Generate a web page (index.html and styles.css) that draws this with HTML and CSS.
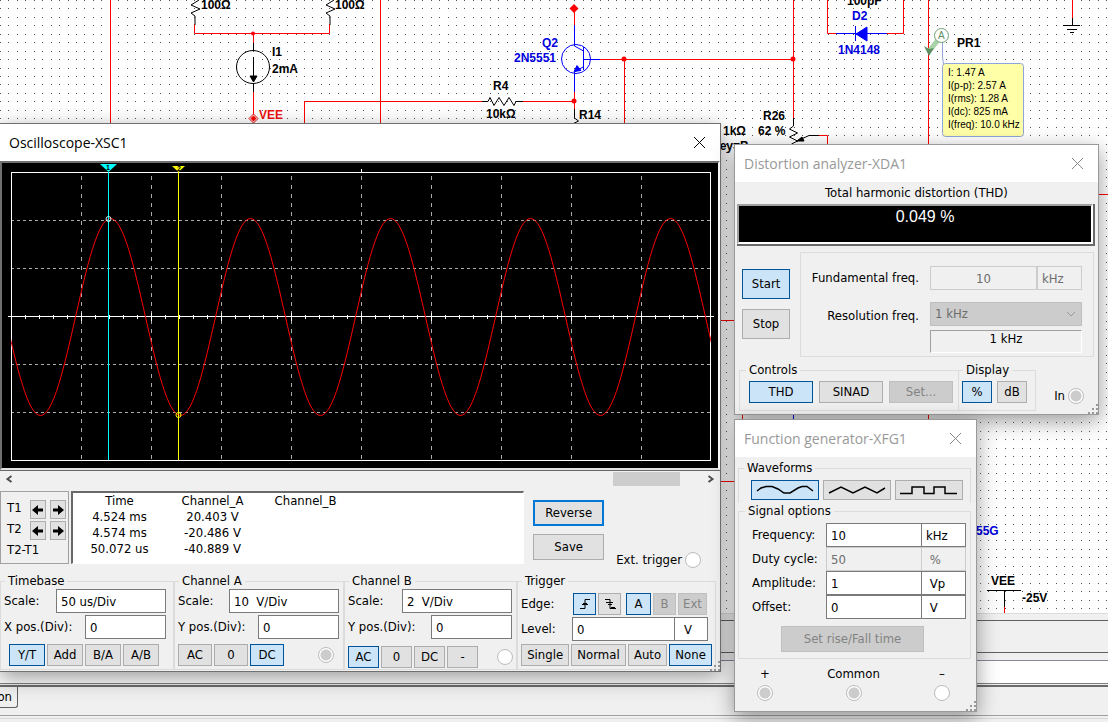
FILE: index.html
```html
<!DOCTYPE html>
<html lang="en">
  <head>
    <meta charset="UTF-8" />
    <meta name="viewport" content="width=device-width, initial-scale=1.0" />
    <title>Circuit simulation</title>
    <link rel="stylesheet" href="styles.css">
  </head>

  <body>
    <!-- schematic sheet -->
    <main class="sheet">
      <svg class="schematic" width="100%" height="100%" aria-label="Schematic">
        <defs>
          <path id="dots" d="M0 0h1v1h-1zM8 0h1v1h-1zM17 0h1v1h-1zM25 0h1v1h-1zM34 0h1v1h-1zM42 0h1v1h-1zM51 0h1v1h-1zM59 0h1v1h-1zM68 0h1v1h-1z" />
          <pattern id="grid" width="76" height="76" patternUnits="userSpaceOnUse">
            <g fill="#555" shape-rendering="crispEdges">
              <use href="#dots" />
              <use href="#dots" y="8" />
              <use href="#dots" y="17" />
              <use href="#dots" y="25" />
              <use href="#dots" y="34" />
              <use href="#dots" y="42" />
              <use href="#dots" y="51" />
              <use href="#dots" y="59" />
              <use href="#dots" y="68" />
            </g>
          </pattern>
        </defs>
        <rect width="100%" height="100%" fill="url(#grid)" />

        <!-- wires -->
        <g class="wire">
          <path d="M110.5 0V130M194.5 24V33.5H329.5V24M253.5 33V43M253.5 92V118M380.5 0V130" />
          <path d="M304.5 130V101.5H483M522 101.5H574.500V110M574.500 10V26M574.500 92V102M599 59.500H793M624.500 59V130" />
          <path d="M793.500 0V119M827.500 0V33.500H836M887 33.500H903.500V0M928.500 0V612M1072.500 0V18M818 135.500H827.500V150" />
          <path d="M720 320.500H736M1098 194.500H1108M720 481.500H736M742.500 412V422M1004.500 606V613" />
        </g>
        <path class="blue" d="M793.500 412V422" />
        <g fill="#f00">
          <circle cx="253" cy="33.500" r="2" />
          <circle cx="574" cy="101" r="2.500" />
          <circle cx="624" cy="59" r="2.500" />
          <circle cx="793" cy="59" r="2.500" />
          <path d="M574 4l4.500 4.500-4.500 4.500-4.500-4.500z" />
          <path d="M253.500 114l4.500 4.500-4.500 4.500-4.500-4.500z" fill="#fff" stroke="#d00" />
          <path d="M253.500 115.500l3 3-3 3-3-3z" />
        </g>

        <!-- resistors, current source, ground -->
        <g class="part">
          <path d="M199 0l-8 5 9 4-9 4 4 3V25" />
          <path d="M334 0l-8 5 9 4-9 4 4 3V25" />
          <circle cx="253" cy="67" r="16.500" />
          <path d="M253.500 43V51M253.500 57V80M253.500 83V92" />
          <path d="M250 76h7l-3.500 6z" fill="#000" />
          <path d="M482 101.500h6l2 -4 4 8 5-8 5 8 5-8 5 8 2-4h7" />
          <path d="M574.500 109V118l4 3-8 4" />
          <path d="M793.500 118V126l-4 3 8 4-8 4 8 4-6 3M797 141l12-5.500h10" />
          <path d="M797 141l5-4 2 4z" fill="#000" />
          <path d="M1072.500 18V25M1063 25.500H1080M1067 29.500H1077M1070 32.500H1074" />
          <path d="M987 590.500H1021M1004.500 591V607" />
        </g>

        <!-- transistor and diode -->
        <g class="blue">
          <circle cx="576" cy="59" r="14.500" />
          <path d="M574.500 25V46l9 5M583.500 47V70M583.500 59.500H600M583 67l-8.500 5V92" />
          <path d="M574 71.500l3-6 4 5z" fill="#00f" />
          <path d="M836 33.500H887M855.500 26V41" />
          <path d="M867 27v14l-11-7z" fill="#00f" />
        </g>

        <g class="name">
          <text x="201" y="9">100Ω</text>
          <text x="335" y="9">100Ω</text>
          <text x="272" y="56">I1</text>
          <text x="272" y="73">2mA</text>
          <text x="493" y="90">R4</text>
          <text x="486" y="118">10kΩ</text>
          <text x="579" y="119">R14</text>
          <text x="847" y="5">100pF</text>
          <text x="957" y="47">PR1</text>
          <text x="763" y="120">R26</text>
          <text x="758" y="135">62 %</text>
          <text x="723" y="135">1kΩ</text>
          <text x="711" y="150">Key=B</text>
          <text x="991" y="585">VEE</text>
          <text x="1022" y="602">-25V</text>
          <text x="259" y="119" fill="#e11">VEE</text>
          <text class="bluename" x="542" y="47">Q2</text>
          <text class="bluename" x="514" y="62">2N5551</text>
          <text class="bluename" x="852" y="20">D2</text>
          <text class="bluename" x="838" y="54">1N4148</text>
          <text class="bluename" x="976" y="535">55G</text>
        </g>

        <!-- current probe -->
        <g>
          <path d="M942.500 42V57l1 7" fill="none" stroke="#8fa4d8" />
          <path d="M938 40l-8 10" stroke="#a9d3a6" stroke-width="5" />
          <path d="M924 46l5 3 5-1-5 8z" fill="#5c8f62" />
          <circle cx="941.500" cy="35.500" r="7" fill="#fff" stroke="#6f9f73" />
          <text class="probe" x="938" y="39" fill="#5c8f62">A</text>
          <rect x="942.500" y="63.500" width="81" height="73" rx="3" fill="#ffffa8" stroke="#8fa4d8" />
          <text class="probe" x="948" y="76">I: 1.47 A</text>
          <text class="probe" x="948" y="89">I(p-p): 2.57 A</text>
          <text class="probe" x="948" y="102">I(rms): 1.28 A</text>
          <text class="probe" x="948" y="115">I(dc): 825 mA</text>
          <text class="probe" x="948" y="128">I(freq): 10.0 kHz</text>
        </g>
      </svg>
    </main>

    <footer class="dock">
      <div class="dock-bar"></div>
      <div class="dock-log"></div>
      <div class="dock-tabs"><button class="tab">on</button></div>
      <div class="dock-status"></div>
    </footer>

    <!-- oscilloscope -->
    <section class="window scope">
      <header class="titlebar">
        <h2>Oscilloscope-XSC1</h2>
        <button class="close" aria-label="Close"><svg width="13" height="13"><path d="M1 1l11 11M12 1L1 12" /></svg></button>
      </header>
      <div class="screen">
        <svg viewBox="2 164 716 303" aria-label="Trace">
          <clipPath id="plot"><rect x="11" y="173" width="700" height="288" /></clipPath>
          <g stroke="#aaa" shape-rendering="crispEdges">
            <path stroke-dasharray="4 5" d="M81.500 176V460M151.500 176V460M221.500 176V460M291.500 176V460M361.500 176V460M431.500 176V460M501.500 176V460M571.500 176V460M641.500 176V460" />
            <path stroke-dasharray="3 3" d="M11 220.500H711M11 268.500H711M11 364.500H711M11 412.500H711" />
          </g>
          <g stroke="#fff" fill="none" shape-rendering="crispEdges">
            <rect x="11.500" y="172.500" width="699" height="288" />
            <path d="M8 316.500H714M361.500 169V173" />
            <path d="M11 316.500H711" stroke-width="4" stroke-dasharray="1 13" />
            <path d="M11 316.500H711" stroke-width="8" stroke-dasharray="1 69" />
          </g>
          <path clip-path="url(#plot)" fill="none" stroke="#f00" d="M-29.500 218.500C-4 218.500 15 415.500 40.500 415.500S85 218.500 110.500 218.500S155 415.500 180.500 415.500S225 218.500 250.500 218.500S295 415.500 320.500 415.500S365 218.500 390.500 218.500S435 415.500 460.500 415.500S505 218.500 530.500 218.500S575 415.500 600.500 415.500S645 218.500 670.500 218.500S715 415.500 740.500 415.500" />
          <path d="M108.500 172V460" stroke="#0ff" shape-rendering="crispEdges" />
          <path d="M178.500 172V460" stroke="#ff0" shape-rendering="crispEdges" />
          <path d="M100 164h17l-8.500 8z" fill="#0ff" />
          <path d="M172 166h13l-6.500 6z" fill="#ff0" />
          <text class="marker" x="106" y="170">1</text>
          <text class="marker" x="177" y="171">2</text>
          <circle cx="108.500" cy="219" r="2.500" fill="none" stroke="#cff" />
          <circle cx="178.500" cy="415" r="2.500" fill="none" stroke="#ff0" />
        </svg>
      </div>
      <div class="scrollbar">
        <button aria-label="Scroll left"><svg width="7" height="8"><path d="M5.500 1l-4 3 4 3" /></svg></button>
        <span class="thumb"></span>
        <button aria-label="Scroll right"><svg width="7" height="8"><path d="M1.500 1l4 3-4 3" /></svg></button>
      </div>

      <div class="readout">
        <div class="cursors">
          <span>T1</span>
          <button class="btn" aria-label="T1 left"><svg width="12" height="12"><path d="M0 6l6-5v3.500h5v3H6V11z" /></svg></button>
          <button class="btn" aria-label="T1 right"><svg width="12" height="12"><path d="M12 6L6 1v3.500H1v3h5V11z" /></svg></button>
          <span>T2</span>
          <button class="btn" aria-label="T2 left"><svg width="12" height="12"><path d="M0 6l6-5v3.500h5v3H6V11z" /></svg></button>
          <button class="btn" aria-label="T2 right"><svg width="12" height="12"><path d="M12 6L6 1v3.500H1v3h5V11z" /></svg></button>
          <span class="diff">T2-T1</span>
        </div>
        <div class="values">
          <table>
            <tr><th>Time</th><th>Channel_A</th><th>Channel_B</th></tr>
            <tr><td>4.524 ms</td><td>20.403 V</td><td></td></tr>
            <tr><td>4.574 ms</td><td>-20.486 V</td><td></td></tr>
            <tr><td>50.072 us</td><td>-40.889 V</td><td></td></tr>
          </table>
        </div>
        <div class="actions">
          <button class="btn focus">Reverse</button>
          <button class="btn">Save</button>
        </div>
        <label class="ext">Ext. trigger <input type="radio" name="ext" /></label>
      </div>

      <div class="settings">
        <fieldset class="timebase">
          <legend>Timebase</legend>
          <label class="field">Scale:<input class="long" value="50 us/Div" /></label>
          <label class="field">X pos.(Div):<input class="short" value="0" /></label>
          <div class="buttons">
            <button class="btn on">Y/T</button>
            <button class="btn">Add</button>
            <button class="btn">B/A</button>
            <button class="btn">A/B</button>
          </div>
        </fieldset>
        <fieldset class="channel">
          <legend>Channel A</legend>
          <label class="field">Scale:<input class="long" value="10  V/Div" /></label>
          <label class="field">Y pos.(Div):<input class="short" value="0" /></label>
          <div class="buttons">
            <button class="btn">AC</button>
            <button class="btn">0</button>
            <button class="btn on">DC</button>
            <input type="radio" name="cha" checked disabled aria-label="Channel A input" />
          </div>
        </fieldset>
        <fieldset class="channel narrow">
          <legend>Channel B</legend>
          <label class="field">Scale:<input class="long" value="2  V/Div" /></label>
          <label class="field">Y pos.(Div):<input class="short" value="0" /></label>
          <div class="buttons">
            <button class="btn on">AC</button>
            <button class="btn">0</button>
            <button class="btn">DC</button>
            <button class="btn">-</button>
            <input type="radio" name="chb" aria-label="Channel B input" />
          </div>
        </fieldset>
        <fieldset class="trigger">
          <legend>Trigger</legend>
          <div class="edge">
            <span>Edge:</span>
            <button class="btn on" aria-label="Rising edge"><svg width="12" height="12"><path d="M1 10.500h5v-9h5M3 6.500h6M4 5.500h4" /></svg></button>
            <button class="btn" aria-label="Falling edge"><svg width="12" height="12"><path d="M1 1.500h5v9h6M2 4.500h7M4 6.500h4M7 9.500h4" /></svg></button>
            <button class="btn on source">A</button>
            <button class="btn" disabled>B</button>
            <button class="btn" disabled>Ext</button>
          </div>
          <div class="level">
            <label for="level">Level:</label>
            <input id="level" value="0" /><input class="unit" value="V" aria-label="Level unit" />
          </div>
          <div class="buttons">
            <button class="btn">Single</button>
            <button class="btn">Normal</button>
            <button class="btn">Auto</button>
            <button class="btn on">None</button>
          </div>
        </fieldset>
      </div>
      <span class="grip"></span>
    </section>

    <!-- distortion analyzer -->
    <section class="window inactive analyzer">
      <header class="titlebar">
        <h2>Distortion analyzer-XDA1</h2>
        <button class="close" aria-label="Close"><svg width="13" height="13"><path d="M1 1l11 11M12 1L1 12" /></svg></button>
      </header>
      <p class="caption">Total harmonic distortion (THD)</p>
      <output class="thd">0.049 %</output>
      <div class="setup">
        <div class="run">
          <button class="btn on">Start</button>
          <button class="btn">Stop</button>
        </div>
        <div class="freqs">
          <label for="fund">Fundamental freq.</label>
          <div class="pair">
            <input id="fund" value="10" disabled />
            <input class="unit" value="kHz" disabled aria-label="Fundamental unit" />
          </div>
          <label class="res-label" for="res">Resolution freq.</label>
          <div class="select">
            <select id="res" disabled><option>1 kHz</option></select>
            <svg width="10" height="6"><path d="M1 1l4 4 4-4" /></svg>
          </div>
          <output class="actual">1 kHz</output>
        </div>
      </div>
      <div class="modes">
        <fieldset class="controls">
          <legend>Controls</legend>
          <button class="btn on">THD</button>
          <button class="btn">SINAD</button>
          <button class="btn" disabled>Set...</button>
        </fieldset>
        <fieldset class="display">
          <legend>Display</legend>
          <button class="btn on">%</button>
          <button class="btn">dB</button>
        </fieldset>
        <label class="in">In <input type="radio" name="in" checked disabled /></label>
      </div>
      <span class="grip"></span>
    </section>

    <!-- function generator -->
    <section class="window inactive generator">
      <header class="titlebar">
        <h2>Function generator-XFG1</h2>
        <button class="close" aria-label="Close"><svg width="13" height="13"><path d="M1 1l11 11M12 1L1 12" /></svg></button>
      </header>
      <div class="options">
        <fieldset class="waves">
          <legend>Waveforms</legend>
          <button class="btn on" aria-label="Sine"><svg width="58" height="10"><path d="M1 6L5 3 10 1.500H16L22 4 28 8H34L42 3 46 1.500H51L57 6" /></svg></button>
          <button class="btn" aria-label="Triangle"><svg width="58" height="10"><path d="M1 8L13 2 25 8 37 2 49 8 57 3" /></svg></button>
          <button class="btn" aria-label="Square"><svg width="58" height="10"><path d="M0 8.500H12V2H24V8.500H34V2H45V8.500H57" /></svg></button>
        </fieldset>
        <fieldset class="signal">
          <legend>Signal options</legend>
          <div class="row"><label for="freq">Frequency:</label><input id="freq" value="10" /><input class="unit" value="kHz" aria-label="Frequency unit" /></div>
          <div class="row"><label for="duty">Duty cycle:</label><input id="duty" value="50" disabled /><input class="unit" value=" %" disabled aria-label="Duty cycle unit" /></div>
          <div class="row"><label for="amp">Amplitude:</label><input id="amp" value="1" /><input class="unit" value=" Vp" aria-label="Amplitude unit" /></div>
          <div class="row"><label for="off">Offset:</label><input id="off" value="0" /><input class="unit" value=" V" aria-label="Offset unit" /></div>
          <button class="btn rise" disabled>Set rise/Fall time</button>
        </fieldset>
      </div>
      <div class="terminals">
        <label>+<input type="radio" name="plus" checked disabled /></label>
        <label>Common<input type="radio" name="common" checked disabled /></label>
        <label>–<input type="radio" name="minus" /></label>
      </div>
      <span class="grip"></span>
    </section>
  </body>
</html>
```
FILE: styles.css
```css
* {
  box-sizing: border-box;
}

body {
  margin: 0;
  height: 100vh;
  display: flex;
  flex-direction: column;
  position: relative;
  overflow: hidden;
  background-color: #fff;
  color: #000;
}

body,
button,
input,
select {
  font-family: "DejaVu Sans Condensed", Tahoma, "Open Sans", sans-serif;
  font-size: 13px;
  line-height: 16px;
}

/* schematic */
.sheet {
  flex: 1;
  min-height: 0;
}
.schematic {
  display: block;
}
.wire {
  fill: none;
  stroke: #f00;
}
.part {
  fill: none;
  stroke: #000;
}
.blue {
  fill: none;
  stroke: #00f;
}
.name {
  font-family: "Liberation Sans", Arial, sans-serif;
  font-size: 12px;
  font-weight: 700;
}
.bluename {
  fill: #00d;
}
.probe {
  font-family: "Liberation Sans", Arial, sans-serif;
  font-size: 10px;
}

/* panels along the bottom edge */
.dock {
  padding-top: 6px;
  background-color: #f0f0f0;
  border-top: 1px solid #ddd;
}
.dock-bar {
  height: 33px;
  border-top: 1px solid #606060;
  border-bottom: 1px solid #606060;
}
.dock-log {
  height: 24px;
  margin-top: 7px;
  background-color: #fff;
  border-top: 1px solid #889;
  border-bottom: 1px solid #808080;
}
.dock-tabs {
  height: 31px;
  margin-top: 1px;
  border-top: 2px solid #6c6c6c;
  border-bottom: 1px solid #a0a0a0;
}
.tab {
  display: block;
  width: 18px;
  height: 21px;
  padding: 0 5px 0 0;
  border: solid #606060;
  border-width: 0 1px 1px 0;
  border-radius: 0 0 3px 0;
  background-color: #f0f0f0;
  direction: rtl;
}
.dock-status {
  height: 4px;
  margin-top: 2px;
  border-top: 1px solid #d8d8d8;
}

/* floating windows */
.window {
  position: absolute;
  background-color: #f0f0f0;
  border: 1px solid #707070;
  box-shadow: 0 6px 20px rgba(0, 0, 0, 0.4);
}
.titlebar {
  display: flex;
  align-items: center;
  justify-content: space-between;
  height: 37px;
  padding: 0 14px 0 9px;
  background-color: #fff;
}
.titlebar h2 {
  margin: 0;
  font-family: "Open Sans", "Segoe UI", sans-serif;
  font-size: 14px;
  font-weight: 400;
}
.inactive {
  border-color: #999;
}
.inactive .titlebar h2 {
  color: #999;
}
.close {
  display: flex;
  padding: 0;
  border: none;
  background: none;
}
.close path {
  stroke: #000;
}
.inactive .close path {
  stroke: #888;
}
.grip {
  position: absolute;
  right: 0;
  bottom: 0;
  width: 12px;
  height: 12px;
  background: conic-gradient(transparent 25%, #999 0 50%, transparent 0) 0 0 / 4px 4px;
  clip-path: polygon(100% 0, 100% 100%, 0 100%);
}

/* controls */
.btn {
  display: flex;
  align-items: center;
  justify-content: center;
  height: 22px;
  padding: 0;
  border: 1px solid #adadad;
  background-color: #e1e1e1;
  color: #000;
}
.btn.on {
  border-color: #005499;
  background-color: #cce4f7;
}
.btn.focus {
  border: 2px solid #0078d7;
}
.btn:disabled {
  border-color: #bfbfbf;
  background-color: #ccc;
  color: #838383;
}
input {
  height: 24px;
  min-width: 0;
  margin: 0;
  padding: 0 4px;
  border: 1px solid #7a7a7a;
  border-radius: 0;
  background-color: #fff;
  color: #000;
  white-space: pre;
}
input:disabled {
  border-color: #ccc;
  background-color: #f0f0f0;
  color: #6d6d6d;
}
input[type="radio"] {
  appearance: none;
  flex: none;
  width: 16px;
  height: 16px;
  padding: 0;
  border: 1px solid #bcbcbc;
  border-radius: 50%;
  background-color: #fff;
}
input[type="radio"]:checked {
  background: radial-gradient(#ccc 5px, #fff 6px);
}
fieldset {
  min-width: 0;
  margin: 0;
  padding: 0;
  border: 1px solid #dcdcdc;
}
legend {
  margin-left: 1px;
  padding: 0 3px;
}
.buttons {
  display: flex;
  gap: 2px;
}

/* oscilloscope */
.scope {
  left: -1px;
  top: 123px;
  width: 722px;
}
.screen {
  padding: 1px 0;
  border: 2px solid #707070;
  border-right-color: #fff;
  border-bottom-color: #e3e3e3;
  box-shadow: 0 1px 0 #696969;
  background-color: #000;
}
.screen svg {
  display: block;
  width: 100%;
}
.marker {
  font-family: "Liberation Sans", Arial, sans-serif;
  font-size: 7px;
  font-weight: 700;
}
.scrollbar {
  display: flex;
  align-items: center;
  justify-content: space-between;
  height: 16px;
  margin: 1px 0 4px;
  padding: 0 6px;
}
.scrollbar button {
  display: flex;
  padding: 0;
  border: none;
  background: none;
}
.scrollbar path {
  fill: none;
  stroke: #505050;
  stroke-width: 2;
}
.thumb {
  width: 67px;
  height: 14px;
  margin-left: auto;
  margin-right: 27px;
  background-color: #cdcdcd;
}
.readout {
  display: flex;
  align-items: flex-start;
}
.cursors {
  display: grid;
  grid-template-columns: 19px 16px 16px;
  align-content: start;
  column-gap: 4px;
  row-gap: 2px;
  width: 69px;
  height: 73px;
  padding: 8px 0 0 6px;
  border: 1px solid #a0a0a0;
}
.cursors .btn {
  height: 19px;
}
.cursors .diff {
  grid-column: 1 / 4;
}
.values {
  flex: 1;
  height: 73px;
  margin-left: 2px;
  border: 1px solid #fff;
  border-top: 2px solid #696969;
  border-left: 2px solid #696969;
  background-color: #fff;
}
table {
  border-collapse: collapse;
}
th,
td {
  width: 93px;
  padding: 0;
  font-weight: 400;
  text-align: center;
}
.actions {
  display: flex;
  flex-direction: column;
  gap: 8px;
  margin: 9px 12px 0 9px;
}
.actions .btn {
  width: 71px;
  height: 26px;
}
.ext {
  display: flex;
  align-items: center;
  gap: 3px;
  padding: 61px 19px 0 0;
}
.settings {
  display: grid;
  grid-template-columns: 174px 170px 173px 1fr;
  margin-top: 5px;
  padding: 0 4px 1px 0;
}
.settings fieldset {
  padding: 0 3px 3px;
}
.field {
  display: flex;
  align-items: center;
  justify-content: space-between;
  margin-bottom: 2px;
  padding-right: 1px;
}
.long {
  width: 110px;
}
.short {
  width: 81px;
}
.settings .buttons {
  margin-top: 5px;
}
.timebase .field {
  padding-right: 4px;
}
.timebase .buttons {
  padding-left: 5px;
}
.timebase .btn {
  width: 36px;
}
.channel .buttons {
  align-items: center;
}
.channel .btn {
  width: 34px;
}
.settings .narrow {
  padding-bottom: 1px;
}
.narrow .buttons {
  padding-top: 2px;
}
.narrow .btn {
  width: 31px;
}
.buttons input {
  margin-left: auto;
  margin-right: 6px;
}
.narrow .buttons input {
  margin-right: 0;
}
.edge {
  display: flex;
  align-items: center;
  gap: 2px;
  padding-top: 4px;
}
.edge span {
  width: 50px;
}
.edge .btn {
  width: 23px;
}
.edge .source {
  width: 25px;
  margin-left: 3px;
}
.edge .btn:last-child {
  width: 29px;
}
.edge path {
  fill: none;
  stroke: #000;
}
.level {
  display: flex;
  align-items: center;
  padding: 2px 4px 0 0;
}
.level label {
  flex: none;
  width: 51px;
}
.level input {
  flex: 1;
}
.level .unit {
  flex: none;
  width: 34px;
  margin-left: -1px;
  padding-left: 9px;
}
.settings .trigger .buttons {
  margin-top: 3px;
}
.trigger .buttons .btn {
  flex: 1 1 auto;
}

/* distortion analyzer */
.analyzer {
  left: 734px;
  top: 144px;
  width: 365px;
}
.caption {
  margin: 0;
  padding: 3px 0;
  text-align: center;
}
.thd {
  display: block;
  height: 40px;
  margin: 0 5px 0 2px;
  padding: 2px 0 0 20px;
  border: 2px solid #a0a0a0;
  border-right-color: #fff;
  border-bottom-color: #fff;
  box-shadow: 1px 1px 0 1px #696969;
  background-color: #000;
  color: #fff;
  font-family: "Liberation Sans", Arial, sans-serif;
  font-size: 16px;
  line-height: 18px;
  text-align: center;
}
.setup {
  display: flex;
  justify-content: space-between;
  padding: 8px 4px 0 7px;
}
.run {
  display: flex;
  flex-direction: column;
  gap: 10px;
  padding-top: 17px;
}
.run .btn {
  width: 48px;
  height: 30px;
}
.freqs {
  display: grid;
  grid-template-columns: 1fr 152px;
  align-items: center;
  column-gap: 11px;
  width: 294px;
  padding: 13px 11px 3px 8px;
  border: 1px solid #dcdcdc;
}
.freqs > label {
  text-align: right;
  white-space: nowrap;
}
.freqs .res-label {
  padding-top: 12px;
}
.pair {
  display: flex;
}
.pair input {
  flex: 1;
  text-align: center;
}
.pair .unit {
  flex: none;
  width: 45px;
  text-align: left;
}
.select {
  display: flex;
  align-items: center;
  margin: 12px 0 4px;
}
.select select {
  width: 100%;
  height: 24px;
  padding: 0 4px;
  appearance: none;
  border: 1px solid #bfbfbf;
  border-radius: 0;
  background-color: #ccc;
  color: #6d6d6d;
  opacity: 1;
}
.select svg {
  flex: none;
  margin-left: -16px;
  margin-right: 6px;
}
.select path {
  fill: none;
  stroke: #999;
}
.actual {
  grid-column: 2;
  height: 23px;
  border: 1px solid #fff;
  border-top-color: #a0a0a0;
  border-left-color: #a0a0a0;
  text-align: center;
}
.modes {
  display: flex;
  padding: 5px 0 3px 4px;
}
.modes fieldset {
  display: flex;
  gap: 6px;
  padding: 3px 5px 7px 9px;
}
.modes .controls {
  border-right: none;
}
.controls legend {
  margin-left: -3px;
}
.modes .display {
  gap: 5px;
  padding: 3px 8px 7px 3px;
}
.controls .btn {
  width: 64px;
}
.display .btn {
  width: 30px;
}
.in {
  display: flex;
  align-items: center;
  gap: 3px;
  margin-left: auto;
  padding: 19px 14px 0 0;
}

/* function generator */
.generator {
  left: 734px;
  top: 419px;
  width: 243px;
}
.options {
  padding: 3px 5px 0 3px;
}
.waves {
  display: flex;
  gap: 4px;
  padding: 4px 7px 3px 12px;
  border-bottom: none;
}
.options legend {
  margin-left: -7px;
}
.waves .btn {
  flex: 1;
  height: 20px;
}
.waves path {
  fill: none;
  stroke: #000;
  stroke-width: 1.5;
}
.signal {
  padding: 4px 4px 6px 13px;
}
.row {
  display: flex;
  align-items: center;
}
.row label {
  flex: 1;
}
.row input {
  width: 96px;
}
.row .unit {
  width: 45px;
  margin-left: -1px;
}
.rise {
  width: 143px;
  height: 26px;
  margin: 7px 0 0 29px;
}
.terminals {
  display: flex;
  justify-content: space-between;
  padding: 7px 26px 10px 22px;
}
.terminals label {
  display: flex;
  flex-direction: column;
  align-items: center;
  gap: 3px;
}
```
